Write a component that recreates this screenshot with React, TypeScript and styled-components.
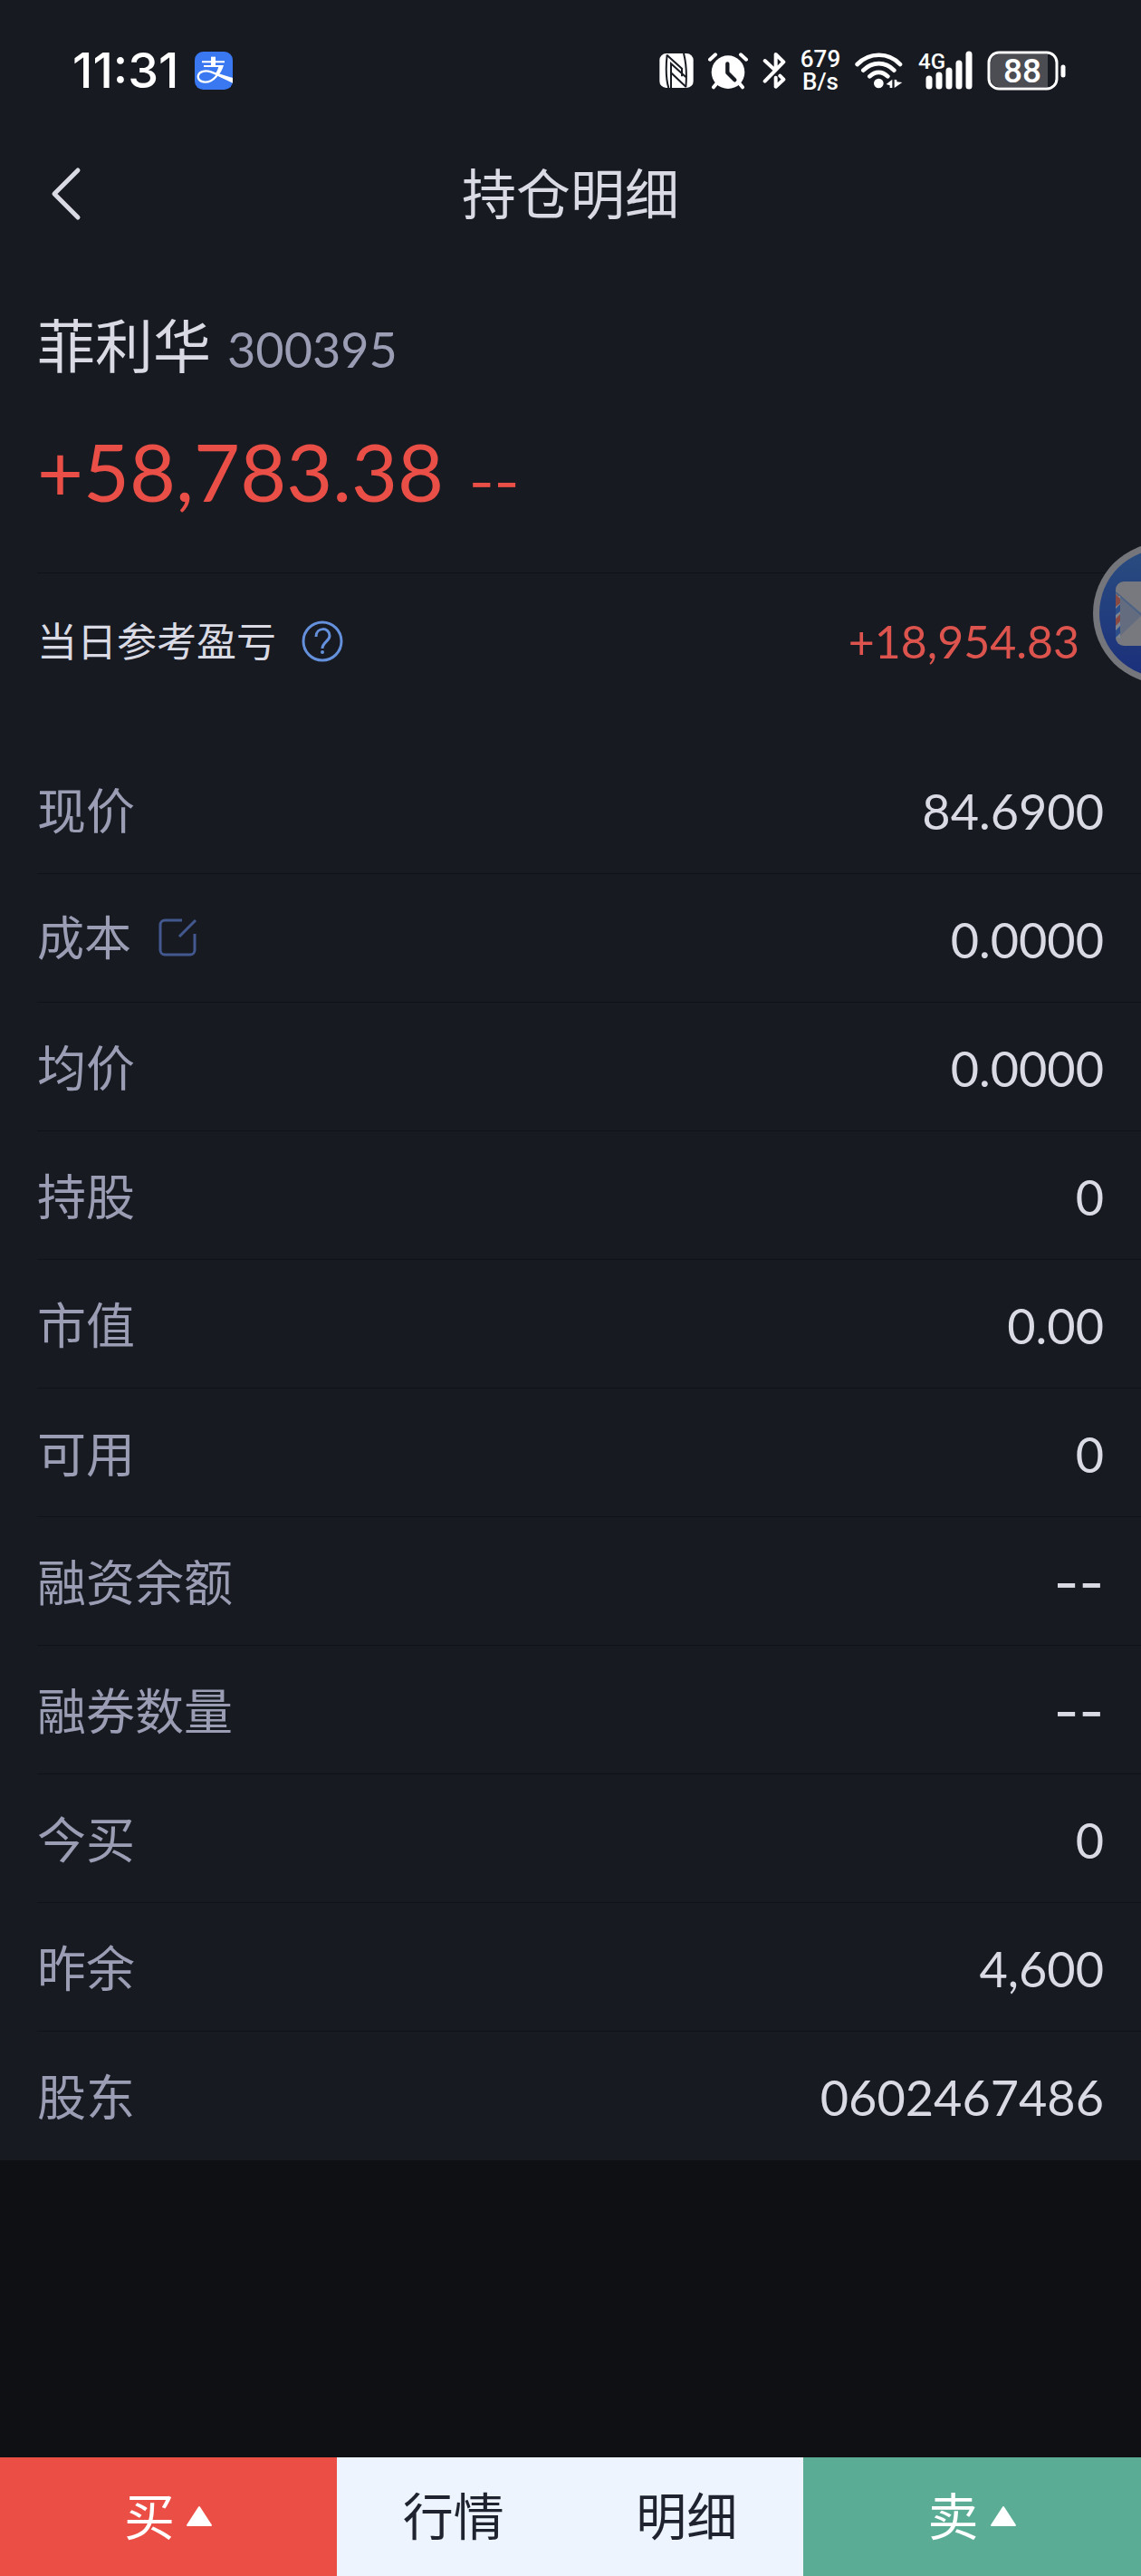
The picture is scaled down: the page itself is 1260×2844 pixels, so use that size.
import React from 'react';
import styled, { createGlobalStyle } from 'styled-components';

const cjk = '"Noto Sans CJK SC", sans-serif';

const GlobalStyle = createGlobalStyle`
  * { box-sizing: border-box; }
  html, body, #root { height: 100%; }
  body {
    margin: 0;
    background: #0f1014;
    font-family: Lato, ${cjk};
    color: #d9dae4;
  }
  button { border: 0; padding: 0; background: none; font: inherit; color: inherit; cursor: pointer; }
  svg { display: block; flex: none; }
`;

const Screen = styled.div`
  min-height: 100%;
  display: flex;
  flex-direction: column;
  position: relative;
  overflow: hidden;
`;

const Panel = styled.div`
  background: #171a21;
`;

const StatusBar = styled.div`
  display: flex;
  align-items: center;
  justify-content: space-between;
  height: 156px;
  padding: 0 82px 0 80px;
  color: #fff;
  font-family: Inter, ${cjk};
`;

const StatusGroup = styled.div<{ $gap: number }>`
  display: flex;
  align-items: center;
  gap: ${(p) => p.$gap}px;
`;

const Clock = styled.time`
  font-size: 54px;
  line-height: 60px;
  font-weight: 500;
`;

const Speed = styled.div`
  display: flex;
  flex-direction: column;
  align-items: center;
  width: 44px;
  font: 500 26px/25px Roboto, sans-serif;
`;

const Header = styled.header`
  display: grid;
  grid-template-columns: 1fr auto 1fr;
  align-items: center;
  height: 116px;
  padding: 0 56px;
`;

const Title = styled.h1`
  margin: 0;
  font-size: 60px;
  line-height: 80px;
  font-weight: 400;
`;

const IconButton = styled.button`
  display: flex;
  justify-self: start;
`;

const Summary = styled.section`
  margin-left: 41px;
  padding-top: 62px;
  height: 361px;
  border-bottom: 1px solid #0f1216;
`;

const NameLine = styled.div`
  display: flex;
  align-items: baseline;
  gap: 18px;
  line-height: 96px;
`;

const StockName = styled.span`
  font-size: 64px;
`;

const StockCode = styled.span`
  font-size: 54px;
  color: #9a9db3;
`;

const ProfitLine = styled.div`
  display: flex;
  align-items: baseline;
  gap: 28px;
  line-height: 120px;
  margin-top: 26px;
  color: #e94f46;
`;

const Profit = styled.span`
  font-size: 88px;
`;

const Dashes = styled.span`
  font-family: Inter, sans-serif;
  font-size: 60px;
  font-weight: 400;
`;

const DayLine = styled.section`
  display: flex;
  align-items: center;
  height: 150px;
  padding: 0 68px 0 41px;
`;

const DayLabel = styled.span`
  font-size: 44px;
  line-height: 60px;
  margin-right: 28px;
`;

const DayValue = styled.span`
  margin-left: auto;
  font-size: 50px;
  line-height: 60px;
  color: #dc544d;
`;

const Rows = styled.dl`
  margin: 0;
  padding: 40px 0 0 41px;
`;

const Row = styled.div`
  display: flex;
  align-items: center;
  justify-content: space-between;
  height: 142px;
  padding: 4px 41px 0 0;
  border-bottom: 1px solid #0f1216;
  &:last-child { border-bottom: 0; }
`;

const Label = styled.dt<{ $compact?: boolean }>`
  display: flex;
  align-items: center;
  gap: 28px;
  font-size: ${(p) => (p.$compact ? 52 : 54)}px;
  line-height: 72px;
  padding-bottom: ${(p) => (p.$compact ? 6 : 0)}px;
  color: #9a9db3;
`;

const Value = styled.dd`
  margin: 0;
  font-size: 54px;
  line-height: 72px;
`;

const Actions = styled.nav`
  display: grid;
  grid-template-columns: 372fr 515fr 373fr;
  height: 131px;
  margin-top: auto;
  font-size: 56px;
  line-height: 80px;
`;

const Trade = styled.button<{ $tone: string }>`
  display: flex;
  align-items: center;
  justify-content: center;
  gap: 12px;
  padding-bottom: 2px;
  background: ${(p) => p.$tone};
  color: #fff;
`;

const Links = styled.div`
  display: grid;
  grid-template-columns: 1fr 1fr;
  padding-bottom: 2px;
  background: #edf4fd;
  color: #1f2330;
`;

const FloatMail = styled.button`
  position: absolute;
  right: -103px;
  top: 599px;
`;

const Triangle = () => (
  <svg width="30" height="24" viewBox="0 0 30 24" aria-hidden="true">
    <path d="M15 2 28 22H2Z" fill="#fff" stroke="#fff" strokeWidth="2" strokeLinejoin="round" />
  </svg>
);

const Alipay = () => (
  <svg width="42" height="42" viewBox="0 0 126 126" aria-hidden="true">
    <rect width="126" height="126" rx="28" fill="#3a78f2" />
    <path d="M24 34h75M30 48h58" stroke="#fff" strokeWidth="6" fill="none" />
    <path d="M54 17h15v30H54z" fill="#fff" />
    <path d="M88 46C82 72 64 101 34 101 15 101 9 88 12 78c4-13 22-17 42-11 20 7 40 20 72 28" fill="none" stroke="#fff" strokeWidth="7" />
    <path d="M80 45h16C92 58 86 70 78 80l-10-6C74 66 78 56 80 45z" fill="#fff" />
    <path d="M70 70 126 87v17L76 80z" fill="#fff" />
  </svg>
);

const Nfc = () => (
  <svg width="38" height="38" viewBox="0 0 112 114" aria-hidden="true">
    <rect width="112" height="114" rx="22" fill="#fff" />
    <path d="M25 4C21 40 21 84 30 114M80 0c10 38 10 78 7 112" fill="none" stroke="#171a21" strokeWidth="6" />
    <path d="M25 6 74 50V76M38 114V34L87 78M38 64 87 110" fill="none" stroke="#171a21" strokeWidth="6" />
  </svg>
);

const Alarm = () => (
  <svg width="44" height="42" viewBox="0 0 132 126" aria-hidden="true">
    <circle cx="66" cy="68" r="55" fill="#fff" />
    <path d="M6 26 24 10M126 26 108 10M28 106 18 118M104 106l10 12" stroke="#fff" strokeWidth="12" strokeLinecap="round" />
    <path d="M64 40v30l24 24" fill="none" stroke="#171a21" strokeWidth="13" strokeLinecap="round" strokeLinejoin="round" />
  </svg>
);

const Bluetooth = () => (
  <svg width="26" height="42" viewBox="0 0 78 126" aria-hidden="true">
    <path d="M8 30 42 62M8 98 70 34 44 9V60M58 80 70 92 44 116V86" fill="none" stroke="#fff" strokeWidth="12" strokeLinecap="round" strokeLinejoin="round" />
  </svg>
);

const Wifi = () => (
  <svg width="54" height="42" viewBox="0 0 162 126" aria-hidden="true">
    <path d="M8 42C48 1 112 1 150 42M28 62c30-30 73-30 102 0M49 82c18-18 42-18 60 0" fill="none" stroke="#fff" strokeWidth="14" strokeLinecap="round" />
    <circle cx="79" cy="105" r="16" fill="#fff" />
    <path d="M124 92v28h-8v-8l-12-4zM131 120V92l8 2v6l18 2z" fill="#fff" />
  </svg>
);

const Signal = () => (
  <svg width="60" height="60" viewBox="0 -8 60 60" aria-hidden="true">
    <text x="0" y="20" fill="#fff" fontFamily="Roboto, sans-serif" fontSize="24" fontWeight="500">4G</text>
    <path d="M12 31v8M23 27v12M34 22v17M45 14v25M56 4v35" stroke="#fff" strokeWidth="7" strokeLinecap="round" />
  </svg>
);

const Battery = () => (
  <svg width="88" height="44" viewBox="0 0 88 44" aria-hidden="true">
    <path d="M13 4h54v36H13a9 9 0 0 1-9-9V13a9 9 0 0 1 9-9z" fill="#4b4d53" />
    <rect x="2" y="2" width="75" height="40" rx="11" fill="none" stroke="#fff" strokeWidth="3" />
    <path d="M84 18v9" stroke="#fff" strokeWidth="5" strokeLinecap="round" />
    <text x="39" y="35" textAnchor="middle" fill="#fff" fontFamily="Roboto, sans-serif" fontSize="37" fontWeight="500">88</text>
  </svg>
);

const Back = () => (
  <svg width="34" height="60" viewBox="0 0 34 60" aria-hidden="true">
    <path d="M30 4 4 30 30 56" fill="none" stroke="#d9dae4" strokeWidth="5" strokeLinecap="round" strokeLinejoin="round" />
  </svg>
);

const Help = () => (
  <svg width="46" height="46" viewBox="0 0 46 46" aria-hidden="true">
    <circle cx="23" cy="23" r="21" fill="none" stroke="#6490dc" strokeWidth="3" />
    <path d="M16 18c0-11 15-11 15-1 0 6-8 7-8 14" fill="none" stroke="#6490dc" strokeWidth="3" />
    <circle cx="23" cy="35" r="2" fill="#6490dc" />
  </svg>
);

const Edit = () => (
  <svg width="46" height="46" viewBox="0 0 46 46" aria-hidden="true">
    <path d="M28 4H9a5 5 0 0 0-5 5v28a5 5 0 0 0 5 5h28a5 5 0 0 0 5-5V19M25 22 43 4" fill="none" stroke="#42588f" strokeWidth="3" />
  </svg>
);

const Mail = () => (
  <svg width="156" height="156" viewBox="0 0 156 156" aria-hidden="true">
    <defs>
      <linearGradient id="sky" x2="0" y2="1">
        <stop stopColor="#294d80" />
        <stop offset="1" stopColor="#1b2f7b" />
      </linearGradient>
      <clipPath id="letter"><rect x="25" y="43" width="106" height="71" rx="9" /></clipPath>
    </defs>
    <circle cx="78" cy="78" r="78" fill="#74767b" />
    <circle cx="78" cy="78" r="71" fill="url(#sky)" />
    <g clipPath="url(#letter)">
      <path d="M25 43h106v71H25z" fill="#77797e" />
      <path d="M29 58 54 80 29 104z" fill="#646c80" />
      <path d="M25 55 56 82" stroke="#4c6285" strokeWidth="2" />
      <path d="M25 59h5v46h-5z" fill="#7c828e" />
      <path d="M25 57l5 5v5l-5 4zM25 84l5-5v8l-5 5z" fill="#8a4a44" />
      <path d="M25 73l5-5v8l-5 4zM25 97l5-5v8l-5 5z" fill="#2c4f8c" />
    </g>
  </svg>
);

const rows: { label: string; value: string; editable?: boolean }[] = [
  { label: '现价', value: '84.6900' },
  { label: '成本', value: '0.0000', editable: true },
  { label: '均价', value: '0.0000' },
  { label: '持股', value: '0' },
  { label: '市值', value: '0.00' },
  { label: '可用', value: '0' },
  { label: '融资余额', value: '--' },
  { label: '融券数量', value: '--' },
  { label: '今买', value: '0' },
  { label: '昨余', value: '4,600' },
  { label: '股东', value: '0602467486' },
];

export default function App() {
  return (
    <Screen>
      <GlobalStyle />
      <Panel>
        <StatusBar>
          <StatusGroup $gap={18}>
            <Clock>11:31</Clock>
            <Alipay />
          </StatusGroup>
          <StatusGroup $gap={16}>
            <Nfc />
            <Alarm />
            <Bluetooth />
            <Speed>
              <span>679</span>
              <span>B/s</span>
            </Speed>
            <Wifi />
            <Signal />
            <Battery />
          </StatusGroup>
        </StatusBar>
        <Header>
          <IconButton aria-label="返回"><Back /></IconButton>
          <Title>持仓明细</Title>
        </Header>
        <Summary>
          <NameLine>
            <StockName>菲利华</StockName>
            <StockCode>300395</StockCode>
          </NameLine>
          <ProfitLine>
            <Profit>+58,783.38</Profit>
            <Dashes>--</Dashes>
          </ProfitLine>
        </Summary>
        <DayLine>
          <DayLabel>当日参考盈亏</DayLabel>
          <IconButton aria-label="说明"><Help /></IconButton>
          <DayValue>+18,954.83</DayValue>
        </DayLine>
        <Rows>
          {rows.map((r) => (
            <Row key={r.label}>
              <Label $compact={r.editable}>
                {r.label}
                {r.editable && <IconButton aria-label="修改成本"><Edit /></IconButton>}
              </Label>
              <Value>{r.value === '--' ? <Dashes>--</Dashes> : r.value}</Value>
            </Row>
          ))}
        </Rows>
      </Panel>
      <Actions>
        <Trade $tone="#eb4e45">买<Triangle /></Trade>
        <Links>
          <button>行情</button>
          <button>明细</button>
        </Links>
        <Trade $tone="#5aac95">卖<Triangle /></Trade>
      </Actions>
      <FloatMail aria-label="消息"><Mail /></FloatMail>
    </Screen>
  );
}
